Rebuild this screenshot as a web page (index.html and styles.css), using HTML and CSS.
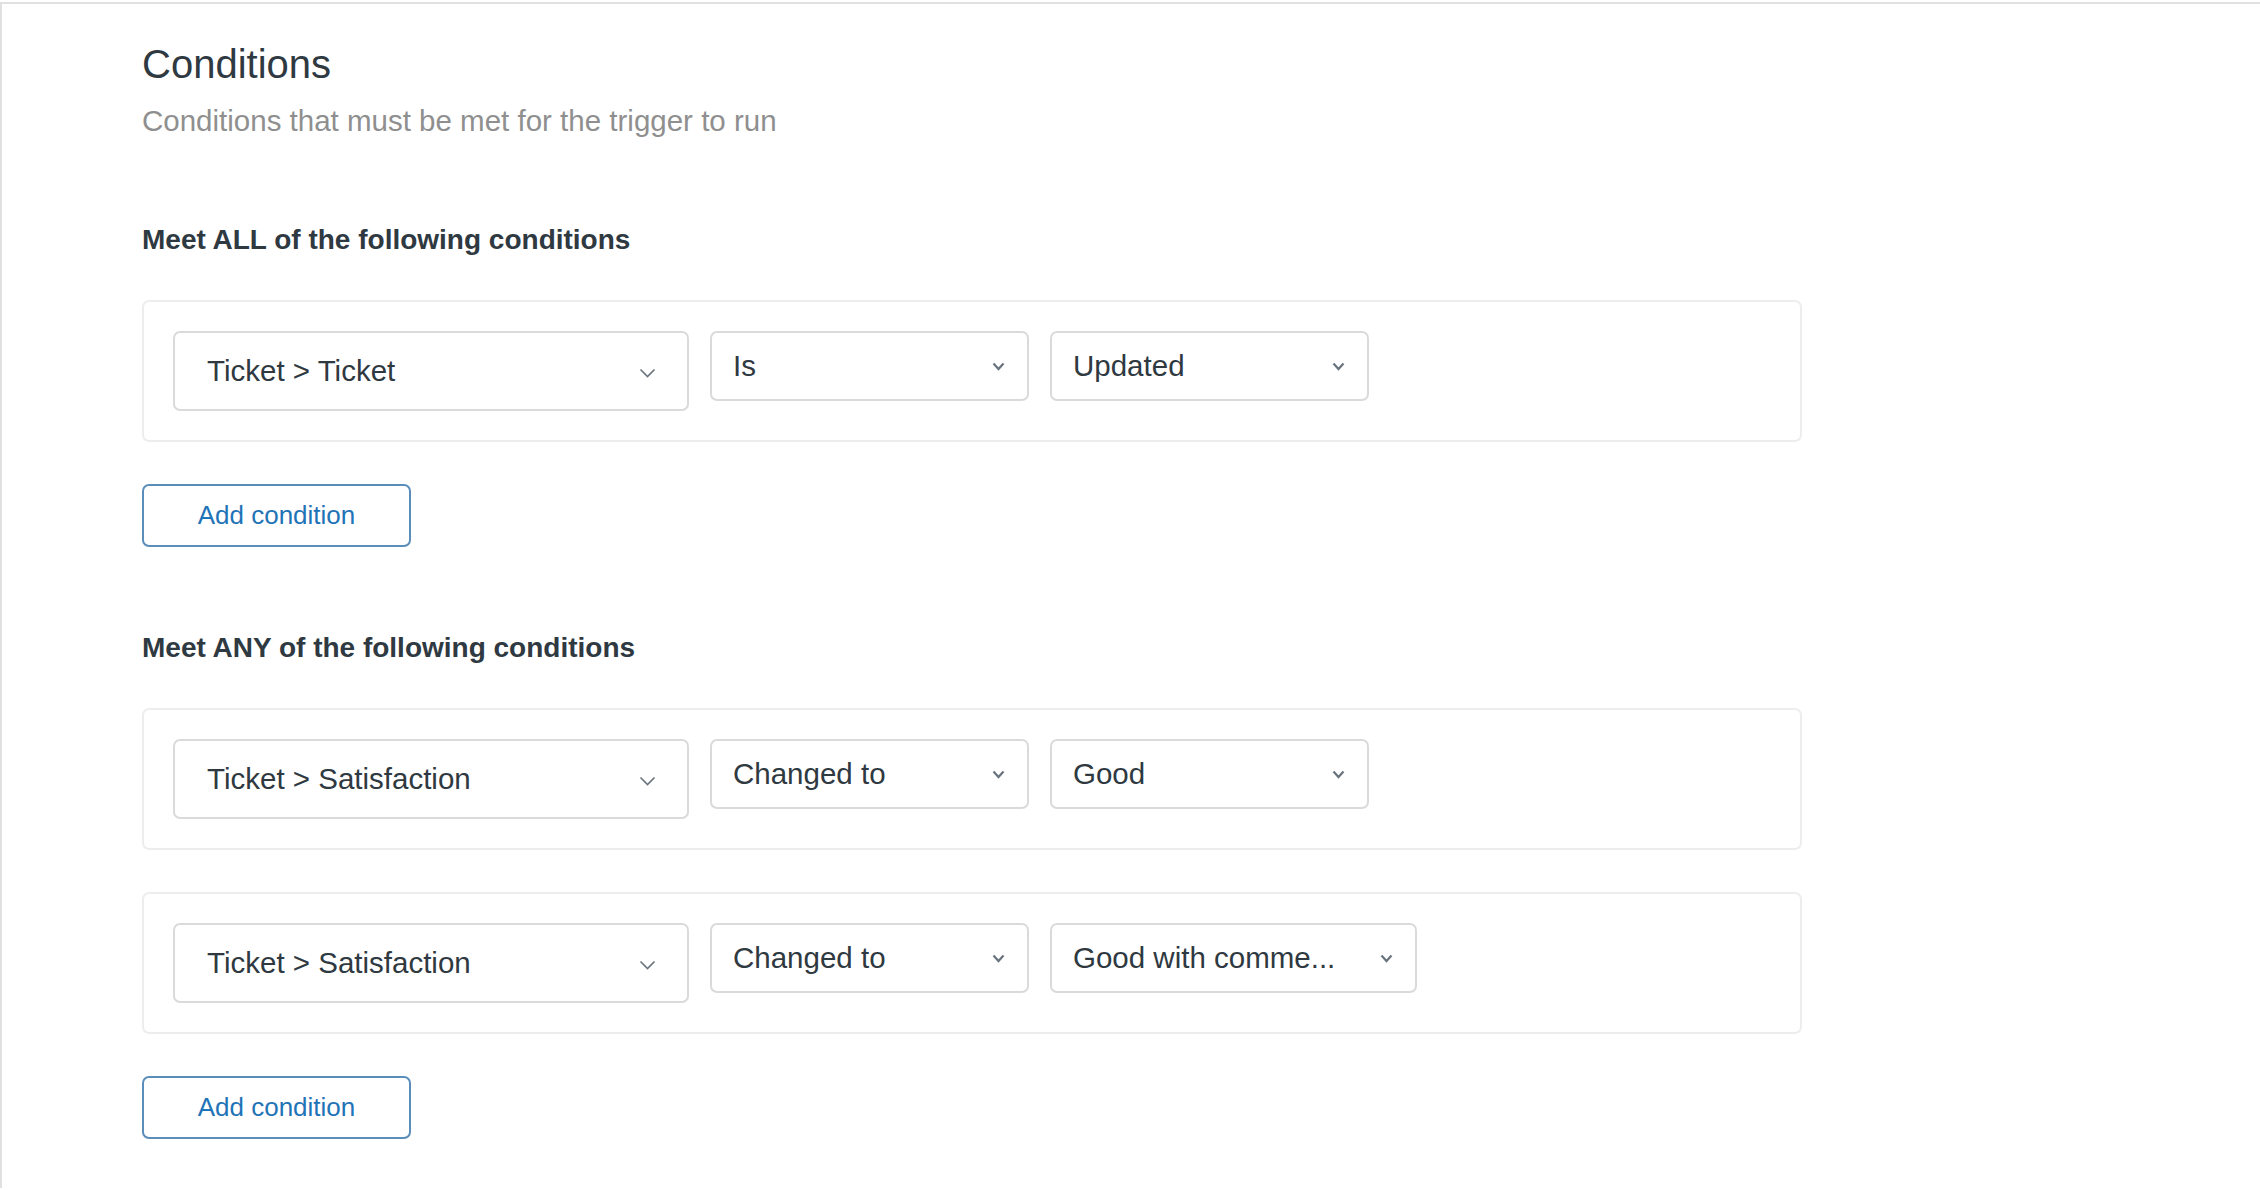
FILE: index.html
```html
<!DOCTYPE html>
<html lang="en">
<head>
  <meta charset="UTF-8" />
  <title>Conditions</title>
  <link rel="stylesheet" href="styles.css">
</head>
<body>
  <div class="page">
    <h1 class="title">Conditions</h1>
    <p class="subtitle">Conditions that must be met for the trigger to run</p>

    <!-- ALL conditions -->
    <h2 class="group-title">Meet ALL of the following conditions</h2>
    <div class="cond-list">
      <div class="cond-card">
        <div class="select select-field">
          <span>Ticket &gt; Ticket</span>
          <svg class="chev-thin" width="17" height="10" viewBox="0 0 17 10"><path d="M1.5 1.5 L8.5 8.5 L15.5 1.5" fill="none" stroke="#68737d" stroke-width="1.6"/></svg>
        </div>
        <div class="select select-op">
          <span>Is</span>
          <svg class="chev" width="13" height="9" viewBox="0 0 13 9"><path d="M1.5 1.5 L6.5 7 L11.5 1.5" fill="none" stroke="#68737d" stroke-width="2.2"/></svg>
        </div>
        <div class="select select-val">
          <span>Updated</span>
          <svg class="chev" width="13" height="9" viewBox="0 0 13 9"><path d="M1.5 1.5 L6.5 7 L11.5 1.5" fill="none" stroke="#68737d" stroke-width="2.2"/></svg>
        </div>
      </div>
    </div>
    <button class="add-btn">Add condition</button>

    <!-- ANY conditions -->
    <h2 class="group-title">Meet ANY of the following conditions</h2>
    <div class="cond-list">
      <div class="cond-card">
        <div class="select select-field">
          <span>Ticket &gt; Satisfaction</span>
          <svg class="chev-thin" width="17" height="10" viewBox="0 0 17 10"><path d="M1.5 1.5 L8.5 8.5 L15.5 1.5" fill="none" stroke="#68737d" stroke-width="1.6"/></svg>
        </div>
        <div class="select select-op">
          <span>Changed to</span>
          <svg class="chev" width="13" height="9" viewBox="0 0 13 9"><path d="M1.5 1.5 L6.5 7 L11.5 1.5" fill="none" stroke="#68737d" stroke-width="2.2"/></svg>
        </div>
        <div class="select select-val">
          <span>Good</span>
          <svg class="chev" width="13" height="9" viewBox="0 0 13 9"><path d="M1.5 1.5 L6.5 7 L11.5 1.5" fill="none" stroke="#68737d" stroke-width="2.2"/></svg>
        </div>
      </div>
      <div class="cond-card">
        <div class="select select-field">
          <span>Ticket &gt; Satisfaction</span>
          <svg class="chev-thin" width="17" height="10" viewBox="0 0 17 10"><path d="M1.5 1.5 L8.5 8.5 L15.5 1.5" fill="none" stroke="#68737d" stroke-width="1.6"/></svg>
        </div>
        <div class="select select-op">
          <span>Changed to</span>
          <svg class="chev" width="13" height="9" viewBox="0 0 13 9"><path d="M1.5 1.5 L6.5 7 L11.5 1.5" fill="none" stroke="#68737d" stroke-width="2.2"/></svg>
        </div>
        <div class="select select-val select-wide">
          <span>Good with comme...</span>
          <svg class="chev" width="13" height="9" viewBox="0 0 13 9"><path d="M1.5 1.5 L6.5 7 L11.5 1.5" fill="none" stroke="#68737d" stroke-width="2.2"/></svg>
        </div>
      </div>
    </div>
    <button class="add-btn">Add condition</button>
  </div>
</body>
</html>
```

FILE: styles.css
```css
body { margin: 0; background: #fff; font-family: "Liberation Sans", Arial, sans-serif; color: #2f3941; }
.page {
  margin-top: 2px;
  border-top: 2px solid #e0e0e0;
  border-left: 2px solid #e0e0e0;
  padding: 36px 0 40px 140px;
  min-height: calc(100vh - 4px);
  box-sizing: border-box;
}
.title { margin: 0; font-size: 40px; line-height: 48px; font-weight: 400; }
.subtitle { margin: 15px 0 0; font-size: 29.5px; line-height: 36px; color: #8f8f8f; }
.group-title { margin: 84px 0 43px; font-size: 28px; line-height: 34px; font-weight: 700; }

.cond-list { display: flex; flex-direction: column; gap: 42px; }
.cond-card {
  width: 1660px;
  box-sizing: border-box;
  border: 2px solid #ededed;
  border-radius: 7px;
  padding: 29px;
  display: flex;
  align-items: flex-start;
  gap: 21px;
}

.select {
  box-sizing: border-box;
  height: 70px;
  border: 2px solid #dadada;
  border-radius: 7px;
  display: flex;
  align-items: center;
  justify-content: space-between;
  padding: 0 22px 0 21px;
  font-size: 29.5px;
  color: #2f3941;
}
.select-field { width: 516px; height: 80px; padding: 0 31px 0 32px; }
.select-field .chev-thin { margin-top: 4px; }
.select-op { width: 319px; }
.select-val { width: 319px; }
.select-wide { width: 367px; }

.add-btn {
  margin-top: 42px;
  width: 269px;
  height: 63px;
  background: #fff;
  border: 2px solid #5a8dba;
  border-radius: 7px;
  color: #1f73b7;
  font-family: "Liberation Sans", Arial, sans-serif;
  font-size: 26px;
  padding: 0;
}
```
